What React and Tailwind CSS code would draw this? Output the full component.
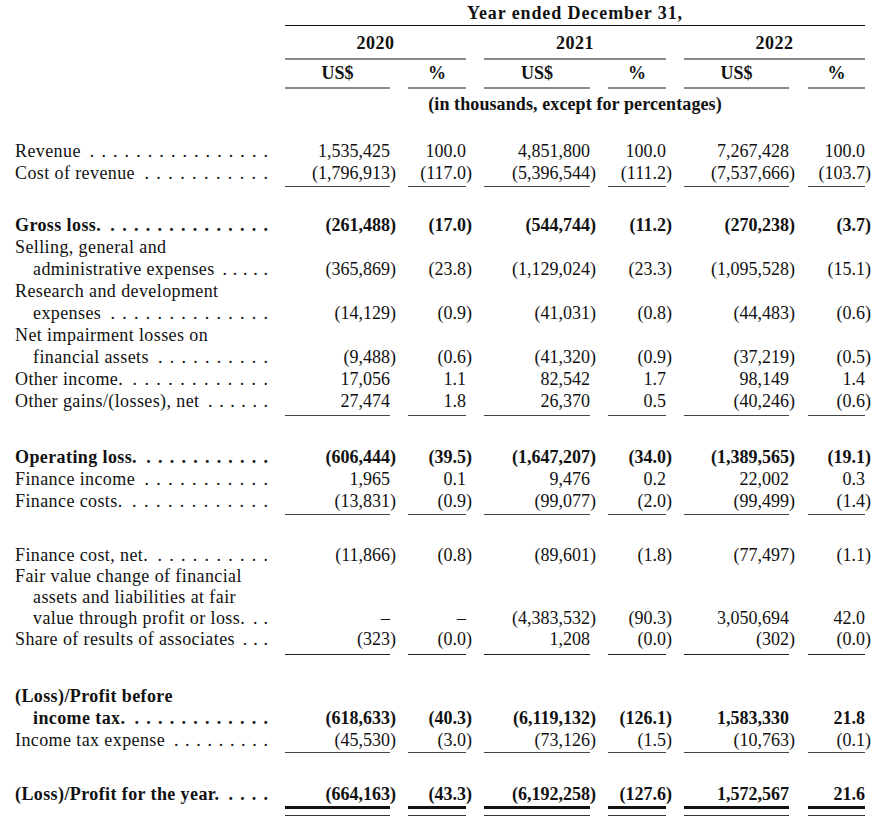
import React from "react";

const colCls = [
  "w-[105px]",
  "ml-[18px] w-[58px]",
  "ml-[18px] w-[106px]",
  "ml-[18px] w-[58px]",
  "ml-[18px] w-[105px]",
  "ml-[19px] w-[57px]",
];

function Num({ v }) {
  if (v.startsWith("(")) {
    return (
      <>
        {v.slice(0, -1)}
        <span className="mr-[-6px]">)</span>
      </>
    );
  }
  return v;
}

function Leader({ n }) {
  return (
    <span className="ml-[2px] flex h-full min-w-0 flex-1 justify-end overflow-hidden">
      {Array.from({ length: n }, (_, i) => (
        <span key={i} className="inline-block w-[12px] text-right">
          .
        </span>
      ))}
    </span>
  );
}

function Row({ label, indent, values, bold, dots = 0, h = "h-[22px] leading-[22px]" }) {
  return (
    <div className={`flex ${h} ${bold ? "font-bold" : ""}`}>
      <div className="flex h-full w-[285px] shrink-0 pl-[15px] pr-[17px]">
        <span className={`whitespace-nowrap tracking-[0.4px] ${indent ? "pl-[18px]" : ""}`}>{label}</span>
        {dots > 0 && <Leader n={dots} />}
      </div>
      {values &&
        values.map((v, i) => (
          <div key={i} className={`${colCls[i]} shrink-0 whitespace-nowrap text-right`}>
            <Num v={v} />
          </div>
        ))}
    </div>
  );
}

function Rule({ cls = "mt-[2px]", line = "h-px bg-[#444]" }) {
  return (
    <div className={`flex pl-[285px] ${cls}`}>
      {colCls.map((c, i) => (
        <div key={i} className={`${c} shrink-0 ${line}`} />
      ))}
    </div>
  );
}

export default function App() {
  return (
    <div className="h-[827px] w-[894px] overflow-hidden bg-white text-[18px] text-[#111]" style={{ fontFamily: '"Liberation Serif", "Times New Roman", serif' }}>
      {/* Header */}
      <div className="flex h-[25px]">
        <div className="w-[285px] shrink-0" />
        <div className="w-[580px] pt-[2px] text-center font-bold leading-[22px] tracking-[0.9px]">Year ended December 31,</div>
      </div>
      <div className="ml-[285px] h-px w-[580px] bg-[#111]" />
      <div className="mt-[6px] flex h-[22px] font-bold leading-[22px] tracking-[0.5px]">
        <div className="w-[285px] shrink-0" />
        <div className="w-[181px] shrink-0 text-center">2020</div>
        <div className="ml-[18px] w-[182px] shrink-0 text-center">2021</div>
        <div className="ml-[18px] w-[181px] shrink-0 text-center">2022</div>
      </div>
      <div className="mt-[4px] flex pl-[285px]">
        <div className="h-[2px] w-[181px] shrink-0 bg-[#8a8a8a]" />
        <div className="ml-[18px] h-[2px] w-[182px] shrink-0 bg-[#8a8a8a]" />
        <div className="ml-[18px] h-[2px] w-[181px] shrink-0 bg-[#8a8a8a]" />
      </div>
      <div className="mt-[2px] flex h-[22px] font-bold leading-[22px]">
        <div className="w-[285px] shrink-0" />
        {["US$", "%", "US$", "%", "US$", "%"].map((t, i) => (
          <div key={i} className={`${colCls[i]} shrink-0 text-center`}>
            {t}
          </div>
        ))}
      </div>
      <Rule cls="mt-[3px]" line="h-[2px] bg-[#8a8a8a]" />
      <div className="mt-[4px] flex h-[22px] font-bold leading-[22px]">
        <div className="w-[285px] shrink-0" />
        <div className="w-[580px] text-center tracking-[0.1px]">(in thousands, except for percentages)</div>
      </div>

      {/* Block A */}
      <div className="mt-[25px]">
        <Row label="Revenue" dots={16} values={["1,535,425", "100.0", "4,851,800", "100.0", "7,267,428", "100.0"]} />
        <Row label="Cost of revenue" dots={11} values={["(1,796,913)", "(117.0)", "(5,396,544)", "(111.2)", "(7,537,666)", "(103.7)"]} />
      </div>
      <Rule cls="mt-[2px]" />

      {/* Block B */}
      <div className="mt-[27px]">
        <Row bold label="Gross loss." dots={14} values={["(261,488)", "(17.0)", "(544,744)", "(11.2)", "(270,238)", "(3.7)"]} />
        <Row label="Selling, general and" />
        <Row indent label="administrative expenses" dots={5} values={["(365,869)", "(23.8)", "(1,129,024)", "(23.3)", "(1,095,528)", "(15.1)"]} />
        <Row label="Research and development" />
        <Row indent label="expenses" dots={14} values={["(14,129)", "(0.9)", "(41,031)", "(0.8)", "(44,483)", "(0.6)"]} />
        <Row label="Net impairment losses on" />
        <Row indent label="financial assets" dots={10} values={["(9,488)", "(0.6)", "(41,320)", "(0.9)", "(37,219)", "(0.5)"]} />
        <Row label="Other income." dots={12} values={["17,056", "1.1", "82,542", "1.7", "98,149", "1.4"]} />
        <Row label="Other gains/(losses), net" dots={6} values={["27,474", "1.8", "26,370", "0.5", "(40,246)", "(0.6)"]} />
      </div>
      <Rule cls="mt-[3px]" />

      {/* Block C */}
      <div className="mt-[30px]">
        <Row bold label="Operating loss." dots={11} values={["(606,444)", "(39.5)", "(1,647,207)", "(34.0)", "(1,389,565)", "(19.1)"]} />
        <Row label="Finance income" dots={11} values={["1,965", "0.1", "9,476", "0.2", "22,002", "0.3"]} />
        <Row label="Finance costs." dots={12} values={["(13,831)", "(0.9)", "(99,077)", "(2.0)", "(99,499)", "(1.4)"]} />
      </div>
      <Rule cls="mt-[2px]" />

      {/* Block D */}
      <div className="mt-[30px]">
        <Row h="h-[21px] leading-[21px]" label="Finance cost, net." dots={10} values={["(11,866)", "(0.8)", "(89,601)", "(1.8)", "(77,497)", "(1.1)"]} />
        <Row h="h-[21px] leading-[21px]" label="Fair value change of financial" />
        <Row h="h-[21px] leading-[21px]" indent label="assets and liabilities at fair" />
        <Row h="h-[21px] leading-[21px]" indent label="value through profit or loss." dots={2} values={["–", "–", "(4,383,532)", "(90.3)", "3,050,694", "42.0"]} />
        <Row h="h-[21px] leading-[21px]" label="Share of results of associates" dots={3} values={["(323)", "(0.0)", "1,208", "(0.0)", "(302)", "(0.0)"]} />
      </div>
      <Rule cls="mt-[4px]" line="h-px bg-[#222]" />

      {/* Block E */}
      <div className="mt-[30px]">
        <Row bold label="(Loss)/Profit before" />
        <Row bold indent label="income tax." dots={12} values={["(618,633)", "(40.3)", "(6,119,132)", "(126.1)", "1,583,330", "21.8"]} />
        <Row label="Income tax expense" dots={9} values={["(45,530)", "(3.0)", "(73,126)", "(1.5)", "(10,763)", "(0.1)"]} />
      </div>
      <Rule cls="mt-[1px]" />

      {/* Block F */}
      <div className="mt-[30px]">
        <Row bold label="(Loss)/Profit for the year." dots={4} values={["(664,163)", "(43.3)", "(6,192,258)", "(127.6)", "1,572,567", "21.6"]} />
      </div>
      <Rule cls="mt-[1px]" line="h-[3px] bg-[#111]" />
      <Rule cls="mt-[6px]" line="h-px bg-[#333]" />
    </div>
  );
}
